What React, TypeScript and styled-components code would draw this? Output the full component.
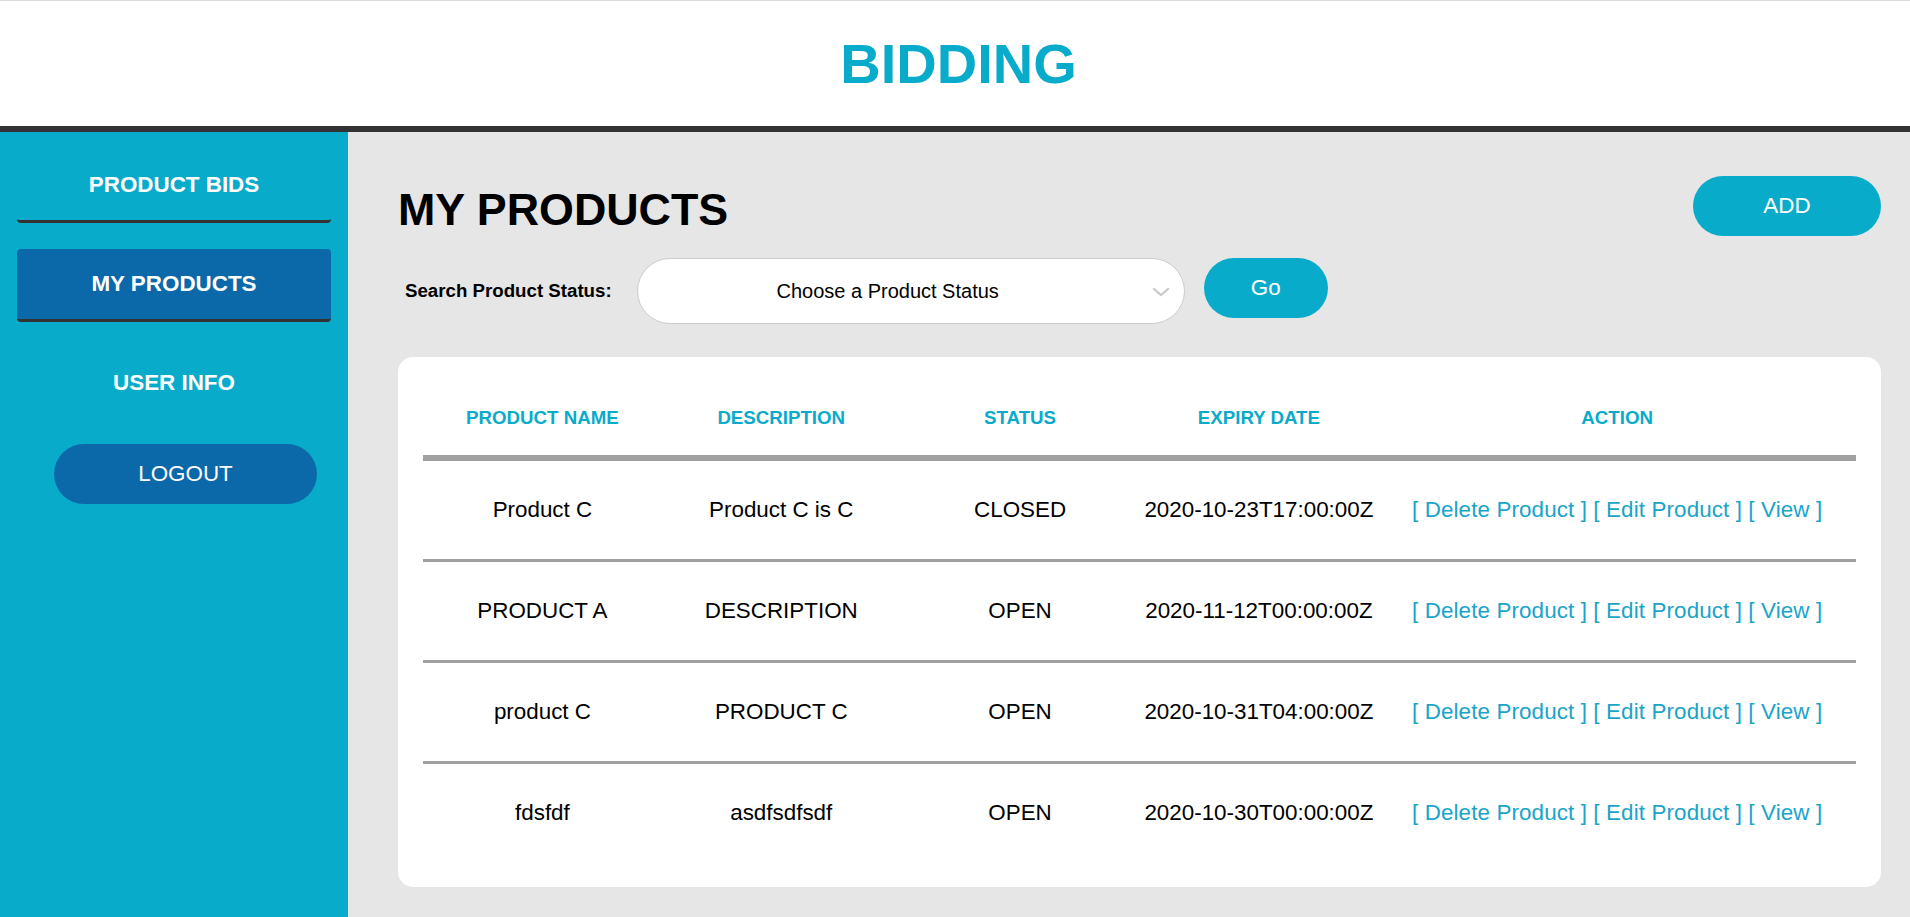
import React from "react";
import styled, { createGlobalStyle } from "styled-components";

const GlobalStyle = createGlobalStyle`
  * {
    box-sizing: border-box;
  }

  body {
    margin: 0;
    font-family: "Liberation Sans", Arial, sans-serif;
    color: #000;
  }
`;

const products = [
  { name: "Product C", description: "Product C is C", status: "CLOSED", expiry: "2020-10-23T17:00:00Z" },
  { name: "PRODUCT A", description: "DESCRIPTION", status: "OPEN", expiry: "2020-11-12T00:00:00Z" },
  { name: "product C", description: "PRODUCT C", status: "OPEN", expiry: "2020-10-31T04:00:00Z" },
  { name: "fdsfdf", description: "asdfsdfsdf", status: "OPEN", expiry: "2020-10-30T00:00:00Z" },
];

const App = () => {
  return (
    <>
      <GlobalStyle />
      <Page>
        <Header>
          <Title>BIDDING</Title>
        </Header>

        <Body>
          <Sidebar>
            <NavItem $variant="underline">PRODUCT BIDS</NavItem>
            <NavItem $variant="active">MY PRODUCTS</NavItem>
            <NavItem $variant="plain">USER INFO</NavItem>
            <LogoutButton>LOGOUT</LogoutButton>
          </Sidebar>

          <Main>
            <TopRow>
              <PageHeading>MY PRODUCTS</PageHeading>
              <PillButton $width={188}>ADD</PillButton>
            </TopRow>

            <FilterRow>
              <FilterLabel>Search Product Status:</FilterLabel>
              <SelectWrap>
                <StatusSelect defaultValue="">
                  <option value="" disabled>
                    Choose a Product Status
                  </option>
                  <option value="OPEN">OPEN</option>
                  <option value="CLOSED">CLOSED</option>
                </StatusSelect>
                <Chevron width="18" height="10" viewBox="0 0 18 10">
                  <path d="M2 2 L9 8 L16 2" fill="none" stroke="#c9c9c9" strokeWidth="2.2" strokeLinecap="round" />
                </Chevron>
              </SelectWrap>
              <PillButton $width={124}>Go</PillButton>
            </FilterRow>

            <Card>
              <HeadRow>
                <HeadCell>PRODUCT NAME</HeadCell>
                <HeadCell>DESCRIPTION</HeadCell>
                <HeadCell>STATUS</HeadCell>
                <HeadCell>EXPIRY DATE</HeadCell>
                <HeadCell>ACTION</HeadCell>
              </HeadRow>

              {products.map((p, i) => (
                <Row key={i}>
                  <Cell>{p.name}</Cell>
                  <Cell>{p.description}</Cell>
                  <Cell>{p.status}</Cell>
                  <Cell>{p.expiry}</Cell>
                  <Cell>
                    <ActionLink>[ Delete Product ]</ActionLink>{" "}
                    <ActionLink>[ Edit Product ]</ActionLink>{" "}
                    <ActionLink>[ View ]</ActionLink>
                  </Cell>
                </Row>
              ))}
            </Card>
          </Main>
        </Body>
      </Page>
    </>
  );
};

export default App;

const Page = styled.div`
  display: flex;
  flex-direction: column;
  min-height: 100vh;
`;

const Header = styled.header`
  height: 132px;
  border-top: 1px solid #dcdcdf;
  border-bottom: 6px solid #333333;
  background: #ffffff;
  display: flex;
  align-items: center;
  justify-content: center;
  padding-left: 7px;
`;

const Title = styled.h1`
  margin: 0;
  font-size: 56px;
  font-weight: bold;
  color: #09abca;
`;

const Body = styled.div`
  flex: 1;
  display: flex;
`;

const Sidebar = styled.nav`
  width: 348px;
  flex-shrink: 0;
  background: #08acca;
  padding-top: 18px;
  display: flex;
  flex-direction: column;
`;

const NavItem = styled.div<{ $variant: "underline" | "active" | "plain" }>`
  margin: 0 17px 26px;
  height: 73px;
  display: flex;
  align-items: center;
  justify-content: center;
  font-size: 22.4px;
  font-weight: bold;
  color: #ffffff;
  border-radius: 4px;
  border-bottom: 3px solid
    ${(p) => (p.$variant === "plain" ? "transparent" : "#333333")};
  background: ${(p) => (p.$variant === "active" ? "#0b69aa" : "transparent")};
  cursor: pointer;
`;

const LogoutButton = styled.button`
  margin: -3px 0 0 54px;
  width: 263px;
  height: 60px;
  border: none;
  border-radius: 30px;
  background: #0b69aa;
  color: #ffffff;
  font-family: inherit;
  font-size: 22.4px;
  cursor: pointer;
`;

const Main = styled.main`
  flex: 1;
  background: #e6e6e6;
  padding: 44px 29px 30px 50px;
`;

const TopRow = styled.div`
  display: flex;
  justify-content: space-between;
  align-items: flex-start;
`;

const PageHeading = styled.h2`
  margin: 8px 0 0;
  font-size: 44.8px;
  font-weight: bold;
  color: #000;
`;

const PillButton = styled.button<{ $width: number }>`
  width: ${(p) => p.$width}px;
  height: 60px;
  border: none;
  border-radius: 30px;
  background: #08acca;
  color: #ffffff;
  font-family: inherit;
  font-size: 22.4px;
  cursor: pointer;
  flex-shrink: 0;
`;

const FilterRow = styled.div`
  margin-top: 22px;
  display: flex;
  align-items: center;
  gap: 19px;

  ${PillButton} {
    align-self: flex-start;
  }
`;

const FilterLabel = styled.label`
  margin-left: 7px;
  margin-right: 6px;
  font-size: 18.7px;
  font-weight: bold;
`;

const SelectWrap = styled.div`
  position: relative;
  width: 548px;
  height: 66px;
`;

const StatusSelect = styled.select`
  appearance: none;
  width: 100%;
  height: 100%;
  border: 1px solid #cccccc;
  border-radius: 33px;
  background: #ffffff;
  padding: 0 46px 0 0;
  font-family: inherit;
  font-size: 20px;
  color: #000;
  text-align: center;
  text-align-last: center;
  outline: none;
`;

const Chevron = styled.svg`
  position: absolute;
  right: 15px;
  top: 29px;
  pointer-events: none;
`;

const Card = styled.section`
  margin-top: 33px;
  background: #ffffff;
  border-radius: 15px;
  padding: 25px;
`;

const columns = "1fr 1fr 1fr 1fr 2fr";

const HeadRow = styled.div`
  display: grid;
  grid-template-columns: ${columns};
  height: 79px;
  padding-bottom: 2px;
  border-bottom: 6px solid #a0a0a0;
  align-items: center;
`;

const HeadCell = styled.div`
  text-align: center;
  font-size: 18.7px;
  font-weight: bold;
  color: #09abca;
`;

const Row = styled.div`
  display: grid;
  grid-template-columns: ${columns};
  height: 101px;
  align-items: center;
  border-bottom: 3px solid #a0a0a0;

  &:last-child {
    border-bottom: none;
    height: 98px;
  }
`;

const Cell = styled.div`
  text-align: center;
  font-size: 22.4px;
  color: #000;
  white-space: nowrap;
`;

const ActionLink = styled.a`
  color: #1aa4c9;
  letter-spacing: 0.12px;
  cursor: pointer;
`;
